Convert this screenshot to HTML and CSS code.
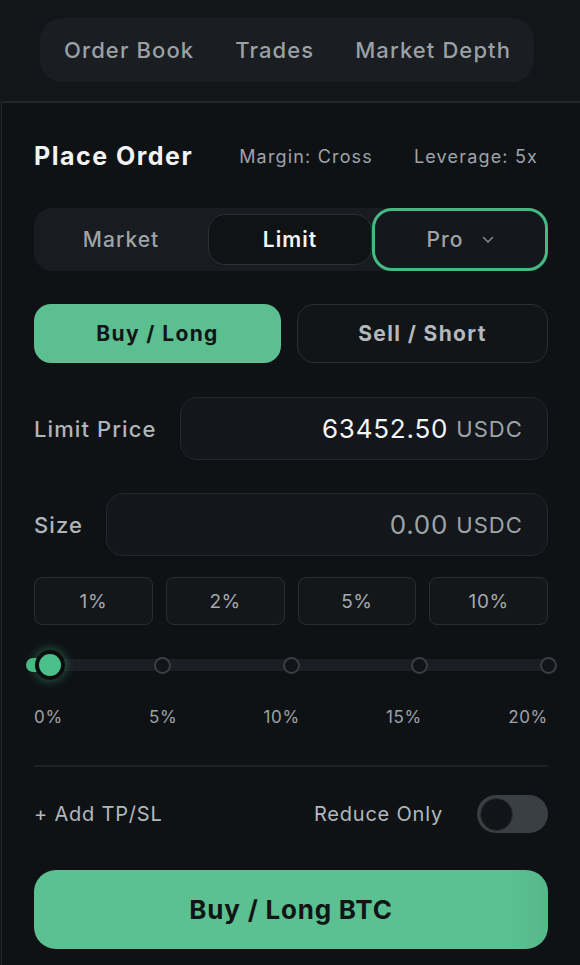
FILE: index.html
```html
<!DOCTYPE html>
<html lang="en">
<head>
<meta charset="utf-8">
<title>Place Order</title>
<link rel="stylesheet" href="styles.css">
</head>
<body>
<div class="top">
  <nav class="tabs">
    <span class="tab">Order Book</span>
    <span class="tab">Trades</span>
    <span class="tab">Market Depth</span>
  </nav>
</div>
<section class="panel">
  <header class="head">
    <h1 class="title">Place Order</h1>
    <span class="meta">Margin: Cross</span>
    <span class="meta">Leverage: 5x</span>
  </header>

  <div class="types">
    <div class="type">Market</div>
    <div class="type type-limit">Limit</div>
    <div class="type type-pro">Pro
      <svg class="chev" width="12" height="8" viewBox="0 0 12 8"><path d="M1.5 1.5 L6 6 L10.5 1.5" fill="none" stroke="#8d9297" stroke-width="1.4" stroke-linecap="round" stroke-linejoin="round"/></svg>
    </div>
  </div>

  <div class="sides">
    <div class="side side-buy">Buy / Long</div>
    <div class="side side-sell">Sell / Short</div>
  </div>

  <div class="field field-price">
    <label class="label">Limit Price</label>
    <div class="input"><span class="val val-on">63452.50</span><span class="unit">USDC</span></div>
  </div>

  <div class="field field-size">
    <label class="label">Size</label>
    <div class="input"><span class="val">0.00</span><span class="unit">USDC</span></div>
  </div>

  <div class="pcts">
    <div class="pct">1%</div>
    <div class="pct">2%</div>
    <div class="pct">5%</div>
    <div class="pct">10%</div>
  </div>

  <div class="slider">
    <div class="track"></div>
    <div class="fill"></div>
    <span class="tick" style="left:162px"></span>
    <span class="tick" style="left:291px"></span>
    <span class="tick" style="left:419px"></span>
    <span class="tick" style="left:548px"></span>
    <span class="thumb"></span>
  </div>

  <div class="marks">
    <span>0%</span><span>5%</span><span>10%</span><span>15%</span><span>20%</span>
  </div>

  <div class="divider"></div>

  <div class="opts">
    <span class="opt">+ Add TP/SL</span>
    <span class="opt opt-reduce">Reduce Only</span>
    <span class="toggle"><span class="knob"></span></span>
  </div>

  <button class="submit">Buy / Long BTC</button>
</section>
</body>
</html>
```

FILE: styles.css
```css
* { box-sizing: border-box; }
html, body { margin: 0; padding: 0; }
body {
  background: #131619;
  font-family: Inter, "Noto Sans", "Liberation Sans", sans-serif;
  color: #9ea3a8;
  width: 580px;
  height: 965px;
  overflow: hidden;
}
.top {
  padding: 18px 0 19px 40px;
}
.tabs {
  width: 494px;
  height: 64px;
  background: #1a1d21;
  border-radius: 22px;
  display: flex;
  align-items: center;
  padding-left: 24px;
  gap: 41px;
}
.tab {
  font-size: 22px;
  letter-spacing: 0.05em;
  font-weight: 500;
  color: #9aa0a5;
}
.panel {
  margin-left: 1px;
  border-left: 1px solid #22262a;
  border-top: 2px solid #22262a;
  background: #0f1215;
  padding: 38px 32px 0 32px;
  height: 870px;
}
.head {
  display: flex;
  align-items: center;
  height: 30px;
}
.title {
  margin: 0;
  font-size: 25px;
  font-weight: 700;
  letter-spacing: 0.06em;
  color: #f2f3f4;
}
.meta {
  font-size: 18px;
  letter-spacing: 0.065em;
  color: #9ea3a8;
  margin-left: 46px;
}
.meta + .meta { margin-left: 41px; }

.types {
  margin-top: 37px;
  height: 63px;
  display: flex;
  background: #181b1f;
  border-radius: 18px;
}
.type {
  display: flex;
  align-items: center;
  justify-content: center;
  font-size: 21px;
  letter-spacing: 0.05em;
  font-weight: 500;
  color: #9ea3a8;
}
.type:first-child { width: 174px; }
.type-limit {
  width: 164px;
  margin: 6px 0;
  border: 1.5px solid #2c3034;
  border-radius: 17px;
  background: #101316;
  color: #f4f5f6;
  font-weight: 600;
}
.type-pro {
  flex: 1;
  border: 3px solid #44b984;
  border-radius: 20px;
  background: #14171b;
  gap: 18px;
}
.chev { margin-top: 1px; }

.sides {
  margin-top: 33px;
  display: flex;
  gap: 16px;
}
.side {
  height: 59px;
  border-radius: 17px;
  display: flex;
  align-items: center;
  justify-content: center;
  font-size: 21px;
  letter-spacing: 0.065em;
  font-weight: 700;
}
.side-buy {
  width: 247px;
  background: #5bbf8f;
  color: #121518;
}
.side-sell {
  flex: 1;
  border: 1.5px solid #2a2e32;
  background: #121518;
  color: #b3b8bd;
}

.field {
  display: flex;
  align-items: center;
}
.field-price { margin-top: 34px; }
.field-size { margin-top: 33px; }
.label {
  font-size: 22px;
  letter-spacing: 0.05em;
  font-weight: 500;
  color: #b0b5ba;
}
.field-price .label { width: 146px; }
.field-size .label { width: 72px; }
.input {
  flex: 1;
  height: 63px;
  border: 1.5px solid #24282c;
  border-radius: 17px;
  background: #13161a;
  display: flex;
  align-items: center;
  justify-content: flex-end;
  padding-right: 24px;
  gap: 8px;
}
.val {
  font-size: 26px;
  letter-spacing: 0.03em;
  color: #9ea3a8;
}
.val-on { color: #f4f5f6; }
.unit {
  font-size: 22px;
  letter-spacing: 0.05em;
  color: #9ea3a8;
}

.pcts {
  margin-top: 21px;
  display: grid;
  grid-template-columns: repeat(4, 1fr);
  gap: 13px;
}
.pct {
  height: 48px;
  border: 1.5px solid #2a2e32;
  border-radius: 8px;
  background: #14171a;
  display: flex;
  align-items: center;
  justify-content: center;
  font-size: 19px;
  letter-spacing: 0.03em;
  color: #a4a9ae;
}

.slider {
  position: relative;
  margin-top: 26px;
  margin-left: -34px;
  width: 580px;
  height: 28px;
}
.track {
  position: absolute;
  left: 26px;
  width: 530px;
  top: 8px;
  height: 12px;
  border-radius: 6px;
  background: #1b1e25;
}
.fill {
  position: absolute;
  left: 26px;
  width: 28px;
  top: 7px;
  height: 14px;
  border-radius: 7px;
  background: #46bb85;
}
.tick {
  position: absolute;
  top: 6px;
  width: 17px;
  height: 17px;
  margin-left: -8.5px;
  border-radius: 50%;
  border: 2px solid #3a3e44;
  background: #111418;
}
.thumb {
  position: absolute;
  left: 35px;
  top: -1px;
  width: 30px;
  height: 30px;
  border-radius: 50%;
  background: #4cc08a;
  border: 4px solid #0b0d0f;
  box-shadow: 0 0 8px 2px rgba(70, 190, 130, 0.35);
}

.marks {
  margin-top: 28px;
  display: flex;
  justify-content: space-between;
  font-size: 17px;
  letter-spacing: 0.04em;
  color: #9ea3a8;
}
.divider {
  margin-top: 38px;
  height: 2px;
  background: #1d2125;
}
.opts {
  margin-top: 28px;
  height: 38px;
  display: flex;
  align-items: center;
}
.opt {
  font-size: 20px;
  letter-spacing: 0.04em;
  color: #b3b8bd;
}
.opt-reduce { margin-left: auto; margin-right: 34px; }
.toggle {
  width: 71px;
  height: 38px;
  border-radius: 19px;
  background: #3a3f43;
  display: flex;
  align-items: center;
  padding-left: 3px;
}
.knob {
  width: 33px;
  height: 33px;
  border-radius: 50%;
  background: #121518;
  border: 1px solid #2a2e31;
}
.submit {
  display: flex;
  align-items: center;
  justify-content: center;
  margin-top: 37px;
  width: 100%;
  height: 79px;
  border: none;
  border-radius: 22px;
  background: linear-gradient(90deg, #5bc190 0%, #5bc190 92%, #55b888 100%);
  font-family: inherit;
  font-size: 26px;
  letter-spacing: 0.03em;
  font-weight: 700;
  color: #121518;
}
```
